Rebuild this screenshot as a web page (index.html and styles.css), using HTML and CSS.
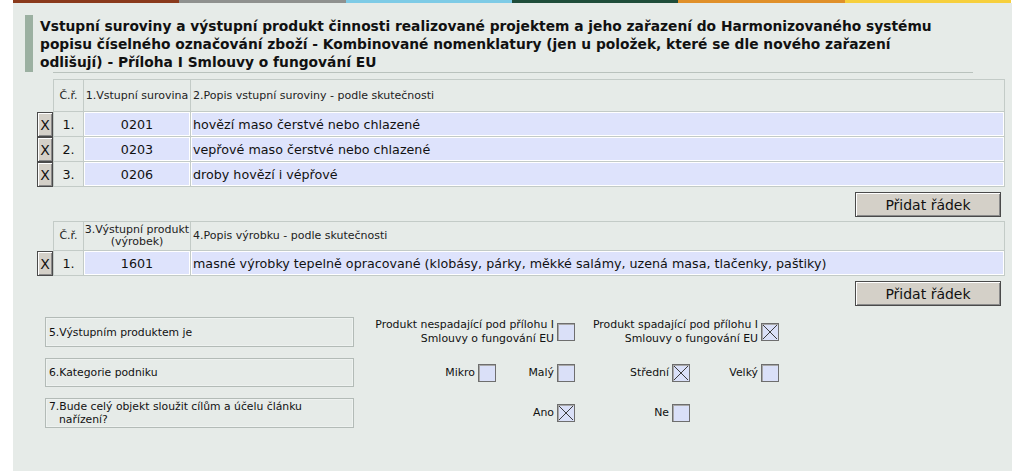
FILE: index.html
```html
<!DOCTYPE html>
<html lang="cs">
<head>
  <meta charset="UTF-8">
  <title>Vstupní suroviny a výstupní produkt</title>
  <link rel="stylesheet" href="styles.css">
</head>
<body>

  <!-- Colour strip -->
  <div class="strip">
    <span class="s1"></span><span class="s2"></span><span class="s3"></span>
    <span class="s4"></span><span class="s5"></span><span class="s6"></span>
  </div>

  <div class="panel">
    <h1 class="title">Vstupní suroviny a výstupní produkt činnosti realizované projektem a jeho zařazení do Harmonizovaného systému popisu číselného označování zboží - Kombinované nomenklatury (jen u položek, které se dle nového zařazení odlišují)&nbsp;- Příloha I Smlouvy o fungování EU</h1>
    <div class="title-rule"></div>

    <!-- Vstupni suroviny -->
    <table class="grid first">
      <tr class="head">
        <th class="del"></th>
        <th class="no">Č.ř.</th>
        <th class="code">1.Vstupní surovina</th>
        <th class="desc">2.Popis vstupní suroviny - podle skutečnosti</th>
      </tr>
      <tr>
        <td class="del"><button class="x-btn">X</button></td>
        <td class="no">1.</td>
        <td class="code val">0201</td>
        <td class="val">hovězí maso čerstvé nebo chlazené</td>
      </tr>
      <tr>
        <td class="del"><button class="x-btn">X</button></td>
        <td class="no">2.</td>
        <td class="code val">0203</td>
        <td class="val">vepřové maso čerstvé nebo chlazené</td>
      </tr>
      <tr>
        <td class="del"><button class="x-btn">X</button></td>
        <td class="no">3.</td>
        <td class="code val">0206</td>
        <td class="val">droby hovězí i vépřové</td>
      </tr>
    </table>
    <div class="actions"><button class="add-btn">Přidat řádek</button></div>

    <!-- Vystupni produkty -->
    <table class="grid">
      <tr class="head">
        <th class="del"></th>
        <th class="no">Č.ř.</th>
        <th class="code">3.Výstupní produkt<br>(výrobek)</th>
        <th class="desc">4.Popis výrobku - podle skutečnosti</th>
      </tr>
      <tr>
        <td class="del"><button class="x-btn">X</button></td>
        <td class="no">1.</td>
        <td class="code val">1601</td>
        <td class="val">masné výrobky tepelně opracované (klobásy, párky, měkké salámy, uzená masa, tlačenky, paštiky)</td>
      </tr>
    </table>
    <div class="actions"><button class="add-btn">Přidat řádek</button></div>

    <!-- Doplnujici otazky -->
    <div class="form-grid">
      <div class="field">5.Výstupním produktem je</div>
      <label class="opt span-a">Produkt nespadající pod přílohu I<br>Smlouvy o fungování EU <span class="box"></span></label>
      <label class="opt span-b">Produkt spadající pod přílohu I<br>Smlouvy o fungování EU <span class="box checked"><svg viewBox="0 0 16 16"><path d="M1 1L15 15M15 1L1 15"/></svg></span></label>

      <div class="field">6.Kategorie podniku</div>
      <label class="opt">Mikro <span class="box"></span></label>
      <label class="opt">Malý <span class="box"></span></label>
      <label class="opt">Střední <span class="box checked"><svg viewBox="0 0 16 16"><path d="M1 1L15 15M15 1L1 15"/></svg></span></label>
      <label class="opt">Velký <span class="box"></span></label>

      <div class="field"><span class="hang">7.Bude celý objekt sloužit cílům a účelu článku nařízení?</span></div>
      <div></div>
      <label class="opt">Ano <span class="box checked"><svg viewBox="0 0 16 16"><path d="M1 1L15 15M15 1L1 15"/></svg></span></label>
      <label class="opt">Ne <span class="box"></span></label>
      <div></div>
    </div>
  </div>

</body>
</html>
```

FILE: styles.css
```css
/* General Reset */
* {
  margin: 0;
  padding: 0;
  box-sizing: border-box;
}

body {
  font-family: 'DejaVu Sans', Verdana, sans-serif;
  background-color: #fff;
  color: #111;
}

/* Colour strip */
.strip {
  display: flex;
  margin-left: 13px;
  width: 998px;
  height: 3px;
}

.strip span {
  flex: 1;
}

.s1 { background-color: #8a3a1c; }
.s2 { background-color: #8f918f; }
.s3 { background-color: #7ecbe6; }
.s4 { background-color: #1f4d3a; }
.s5 { background-color: #e0902a; }
.s6 { background-color: #f6cf3c; }

/* Panel */
.panel {
  margin-left: 13px;
  width: 999px;
  min-height: 468px;
  background-color: #e6ebe8;
  padding: 12px 7px 0 24px;
}

.title {
  margin-left: -12px;
  border-left: 8px solid #9bb0a1;
  padding: 2px 43px 1px 7px;
  font-size: 13.8px;
  line-height: 18px;
  font-weight: bold;
  color: #111;
}

.title-rule {
  margin-left: 16px;
  width: 920px;
  height: 1px;
  background-color: #b9c2bd;
}

/* Tables */
.grid {
  margin-top: 4px;
  width: 968px;
  border-collapse: separate;
  border-spacing: 0;
  table-layout: fixed;
}

.grid.first {
  margin-top: 6px;
}

.grid th {
  height: 30px;
  font-size: 11px;
  font-weight: normal;
  color: #222;
  line-height: 12px;
  border-top: 1px solid #c3cbc7;
  border-left: 1px solid #c3cbc7;
  border-bottom: 1px solid #c3cbc7;
  vertical-align: middle;
}

.grid.first th {
  height: 33px;
}

.grid th.desc {
  text-align: left;
  padding-left: 2px;
  border-right: 1px solid #c3cbc7;
}

.grid th.del {
  border: none;
  width: 16px;
}

.grid .no {
  width: 30px;
  text-align: center;
}

.grid .code {
  width: 107px;
  text-align: center;
}

.grid td {
  height: 25px;
  font-size: 12.7px;
  border-left: 1px solid #c3cbc7;
  border-bottom: 1px solid #c3cbc7;
  vertical-align: middle;
}

.grid td:last-child {
  border-right: 1px solid #c3cbc7;
}

.grid td.del {
  border: none;
}

.grid td.val {
  background-color: #dee3fc;
  box-shadow: inset 0 0 0 1px #fff;
  padding-left: 2px;
}

.grid td.code {
  padding-left: 0;
}

.x-btn {
  display: block;
  width: 16px;
  height: 25px;
  font-family: 'DejaVu Sans', sans-serif;
  font-size: 14px;
  color: #111;
  background-color: #d4d0c8;
  border: 1px solid #4a4a4a;
  box-shadow: inset 1px 1px #fff, inset -1px -1px #8a8a8a;
}

/* Add row button */
.actions {
  display: flex;
  justify-content: flex-end;
  padding-right: 4px;
  margin-top: 5px;
}

.add-btn {
  width: 146px;
  height: 25px;
  font-family: 'DejaVu Sans', sans-serif;
  font-size: 14px;
  color: #111;
  background-color: #d4d0c8;
  border: 1px solid #4a4a4a;
  box-shadow: inset 1px 1px #fff, inset -1px -1px #8a8a8a;
}

/* Questions */
.form-grid {
  display: grid;
  grid-template-columns: 309px 142px 79px 115px 89px;
  grid-template-rows: 30px 29px 30px;
  row-gap: 11px;
  margin: 11px 0 0 8px;
}

.field {
  display: flex;
  align-items: center;
  padding-left: 3px;
  font-size: 10.8px;
  line-height: 13px;
  color: #111;
  border: 1px solid #b3bbb7;
  box-shadow: inset 0 0 0 1px #eef2f0;
}

.hang {
  display: block;
  width: 275px;
  padding-left: 10px;
  text-indent: -10px;
}

.opt {
  display: flex;
  justify-content: flex-end;
  align-items: center;
  gap: 3px;
  font-size: 10.9px;
  line-height: 14px;
  text-align: right;
  color: #111;
}

.span-a {
  grid-column: 2 / 4;
}

.span-b {
  grid-column: 4 / 6;
}

.box {
  flex: none;
  width: 18px;
  height: 18px;
  background-color: #dae0f8;
  border: 1px solid #6e6e6e;
  box-shadow: inset 1px 1px #a8a8a8;
}

.box svg {
  display: block;
  width: 16px;
  height: 16px;
}

.box path {
  stroke: #3c3c3c;
  stroke-width: 1;
  fill: none;
}
```
